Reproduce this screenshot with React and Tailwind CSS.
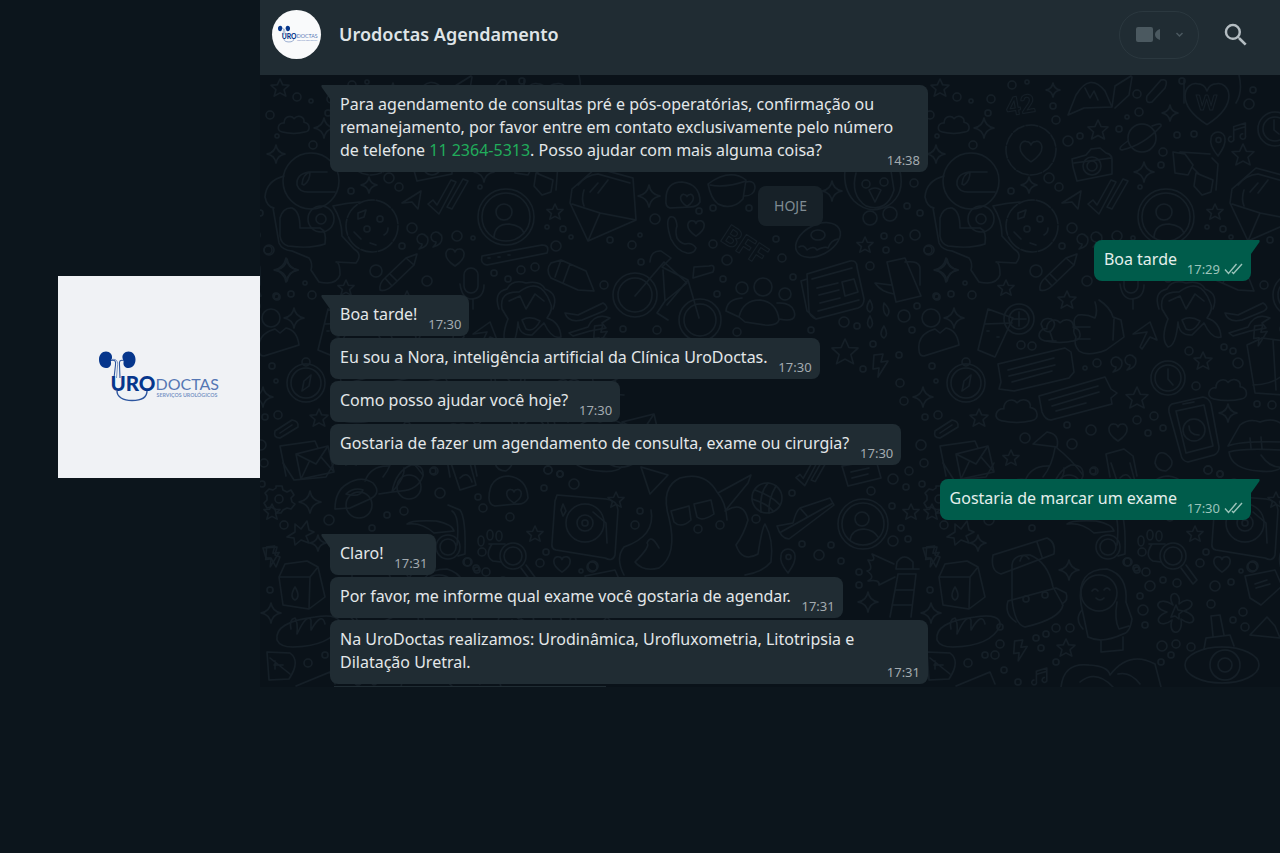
import React from "react";
import { MdSearch } from "react-icons/md";

/* ---------- brand ---------- */

function Logo({ viewBox, className }) {
  return (
    <svg viewBox={viewBox} className={className} role="img" aria-label="UroDoctas">
      <g fill="#06368c">
        <path d="M48 75.500C52 75.500 54.500 78.500 54 82C53.700 84 52.500 84.500 53 86.500C53.500 90 51 92 48 92C43.500 92 41 88 41 83.500C41 79 44 75.500 48 75.500Z" />
        <path d="M70.500 75.500C66.500 75.500 64 78.500 64.500 82C64.800 84 66 84.500 65.500 86.500C65 90 67.500 92 70.500 92C75 92 77.500 88 77.500 83.500C77.500 79 74.500 75.500 70.500 75.500Z" />
      </g>
      <g fill="none" stroke="#2c559f" strokeWidth="1.100">
        <path d="M53 84.500C57 83.500 58 85 57.500 89L56 102M66 84.500C62 83.500 61 85 61.500 89L62 102" />
        <path d="M54 83.500C59 82.500 60 86 59.500 90L58.500 102" strokeWidth=".6" />
        <path d="M59 115C59 121 65 124.500 74 124.500C84 124.500 89 121 89 115" strokeWidth="1.400" />
      </g>
      <text x="52.500" y="115" fontFamily="Lato, sans-serif" fontWeight="900" fontSize="20.500" fill="#06368c">URO</text>
      <text x="97.500" y="114" fontFamily="Lato, sans-serif" fontWeight="400" fontSize="16" fill="#5577b4">DOCTAS</text>
      <text x="98.500" y="121" fontFamily="Lato, sans-serif" fontWeight="700" fontSize="5.300" fill="#7d97c6">SERVIÇOS UROLÓGICOS</text>
    </svg>
  );
}

/* ---------- wallpaper ---------- */

const STAR = "M0-10L3-3.500L10-3L4.500 2L6.500 9L0 5.500L-6.500 9L-4.500 2L-10-3L-3-3.500Z";
const SPARK = "M0-10Q1.500-1.500 10 0Q1.500 1.500 0 10Q-1.500 1.500-10 0Q-1.500-1.500 0-10Z";
const HEART = "M0 9C-14 0-9-9-4-8Q-1-8 0-5Q1-8 4-8C9-9 14 0 0 9Z";
const CLOUD = "M-13 9C-21 7-17-2-11-1C-11-9-3-10 0-6C5-11 12-8 11-2C18-1 19 8 12 9Q0 12-13 9Z";
const BOLT = "M-6-10L3-11L1-3L8-4L-2 12L-1 3L-7 4Z";
const QUOTES = "M-4-7a5 5 0 1 0-4 8q0 3-3 5q9-2 9-9q0-3-2-4M10-9a5 5 0 1 0-4 8q0 3-3 5q9-2 9-9q0-3-2-4";
const CHECKS = "M-20 2L-15-2L-11 3L3-22L8-20L-9 12ZM-1 5L15-23L20-21L4 7Z";
const PENCIL = "M-20 17Q-21 10-15 5L6-15L17-19L14-8L-8 13Q-15 19-20 17M6-15L14-8M-15 5L-8 13M-10 1L-3 8";
const NOTE = "M-7 7V-6L6-10V4M-7 7a3 3 0 1 1-3-2M6 4a3 3 0 1 1-3-2M-7-2L6-6";
const ENVELOPE = "M-18-8L14-16L20 10L-13 17ZM-18-8L2 2L14-16M-13 17L-5 0M20 10L7-5";
const PIN = "M0 13Q-9 2-7-4A7 7 0 0 1 7-4Q8 2 0 13ZM-2-3a2.500 2.500 0 1 0 5 0a2.500 2.500 0 1 0-5 0";
const PHONE = "M-12-18Q-6-20-5-9Q-7-4-5 3Q-2 8 3 9Q10 7 14 13Q12 19 5 18Q-5 16-11 4Q-17-14-12-18Z";

const marks = [
  [STAR, 280, 88, 0.9], [STAR, 1098, 130, 1], [STAR, 1243, 155, 1.100], [STAR, 555, 212, 0.8],
  [STAR, 346, 288, 0.8], [STAR, 1067, 300, 0.9], [STAR, 865, 245, 0.8], [STAR, 845, 352, 1.300],
  [STAR, 1203, 361, 0.9], [STAR, 1137, 398, 1.100], [STAR, 979, 418, 0.9], [STAR, 1011, 458, 0.8],
  [STAR, 535, 534, 0.8], [STAR, 911, 512, 0.8], [STAR, 616, 500, 0.8], [STAR, 1066, 648, 0.9], [STAR, 272, 512, 0.8],
  [SPARK, 1053, 90, 0.7], [SPARK, 984, 128, 1], [SPARK, 276, 154, 0.9], [SPARK, 369, 185, 0.8],
  [SPARK, 1144, 172, 1], [SPARK, 1170, 113, 0.8], [SPARK, 287, 270, 1.100], [SPARK, 649, 196, 1.100],
  [SPARK, 832, 191, 1], [SPARK, 946, 270, 1.200], [SPARK, 923, 397, 1], [SPARK, 954, 318, 1],
  [SPARK, 1228, 413, 0.9], [SPARK, 310, 502, 1.100], [SPARK, 1069, 570, 1], [SPARK, 271, 613, 1],
  [SPARK, 868, 602, 1], [SPARK, 978, 543, 0.8],
  [HEART, 455, 257, 1], [HEART, 696, 228, 0.9], [HEART, 1118, 432, 1], [HEART, 562, 564, 0.9], [HEART, 1207, 103, 2.400],
  [HEART, 1031, 151, 1.200], [HEART, 687, 200, 0.7], [HEART, 514, 496, 0.8],
  [CLOUD, 294, 124, 0.9], [CLOUD, 1017, 410, 1.200], [CLOUD, 1228, 389, 1.100], [CLOUD, 400, 330, 1.200],
  [BOLT, 880, 365, 1], [BOLT, 932, 556, 0.9], [BOLT, 1020, 650, 0.9], [BOLT, 600, 335, 0.9],
  [QUOTES, 430, 243, 1], [QUOTES, 1124, 366, 1],
  [CHECKS, 448, 202, 1], [CHECKS, 812, 476, 0.8], [PENCIL, 400, 273, 1],
  [NOTE, 1240, 132, 0.9], [NOTE, 1042, 676, 0.8], [ENVELOPE, 974, 462, 1], [ENVELOPE, 640, 430, 1],
  [PIN, 1218, 143, 1], [PIN, 788, 560, 1], [PHONE, 682, 235, 1],
];

const rings = [
  [297, 97, 4], [270, 115, 4], [313, 145, 4], [277, 136, 2], [311, 101, 2], [389, 178, 5], [399, 187, 4], [351, 191, 3],
  [412, 228, 5], [457, 236, 5], [402, 246, 3], [376, 271, 6], [427, 281, 5], [268, 250, 4], [305, 283, 2], [312, 295, 4],
  [276, 296, 3], [291, 294, 3], [473, 238, 2], [556, 246, 5], [571, 237, 2], [521, 270, 4], [535, 267, 4], [494, 273, 3],
  [508, 279, 3], [547, 227, 2], [563, 229, 3], [655, 219, 5], [699, 211, 3], [713, 208, 3], [632, 245, 4], [640, 235, 2],
  [713, 244, 4], [727, 260, 5], [749, 208, 3], [782, 258, 4], [776, 239, 3], [899, 239, 4], [915, 235, 5], [886, 250, 3],
  [884, 236, 3], [929, 250, 5], [914, 183, 4], [907, 206, 3], [920, 213, 3], [641, 262, 3], [723, 279, 3], [717, 294, 3],
  [870, 266, 4], [844, 322, 5], [857, 326, 3], [811, 330, 3], [737, 332, 4], [657, 330, 4], [623, 329, 3], [604, 285, 4],
  [793, 277, 3], [873, 344, 3], [899, 355, 3], [900, 383, 4], [863, 369, 3], [904, 316, 6], [917, 306, 3], [937, 297, 3],
  [912, 330, 3], [1021, 345, 4], [1032, 346, 4], [1097, 363, 4], [1085, 368, 2], [932, 366, 3], [936, 381, 2],
  [925, 417, 3], [938, 415, 4], [904, 401, 4], [921, 445, 5], [924, 463, 4], [909, 471, 4], [1025, 438, 5], [1072, 444, 5],
  [1067, 425, 3], [1091, 430, 5], [1137, 420, 4], [1154, 416, 4], [1148, 433, 3], [1163, 428, 3], [1189, 351, 4],
  [1238, 363, 5], [1196, 386, 4], [1224, 347, 3], [1233, 351, 3], [1257, 404, 3], [1272, 405, 4], [1208, 470, 4],
  [1220, 474, 3], [1094, 471, 4], [329, 520, 5], [284, 525, 4], [372, 528, 3], [404, 511, 4], [387, 515, 3], [440, 493, 5],
  [433, 471, 3], [548, 470, 4], [560, 474, 3], [574, 484, 5], [510, 517, 4], [544, 488, 3], [483, 508, 4], [478, 497, 3],
  [467, 562, 4], [477, 570, 3], [592, 567, 5], [546, 552, 3], [635, 525, 4], [640, 511, 3], [698, 529, 4], [720, 525, 4],
  [756, 519, 4], [792, 493, 3], [802, 544, 3], [819, 555, 5], [831, 545, 3], [841, 561, 3], [871, 491, 4], [893, 479, 5],
  [906, 487, 3], [922, 484, 3], [892, 506, 3], [893, 541, 5], [908, 539, 3], [901, 528, 3], [859, 572, 3],
  [859, 585, 3], [930, 590, 3], [1000, 627, 3], [1128, 562, 4], [1136, 568, 3], [1146, 572, 4], [1150, 586, 5],
  [1143, 610, 5], [1140, 596, 3], [1145, 625, 3], [1163, 580, 3], [1177, 583, 4], [1215, 586, 5], [1231, 582, 3],
  [1211, 604, 4], [1243, 612, 4], [1233, 620, 3], [1245, 627, 4], [1200, 563, 4], [1253, 566, 5], [1241, 571, 2],
  [1162, 646, 5], [1176, 644, 4], [1191, 647, 4], [1171, 655, 3], [1161, 662, 3], [1056, 628, 4], [1070, 628, 4],
  [1046, 634, 3], [1036, 638, 3], [1000, 644, 4], [985, 655, 3], [995, 655, 4], [968, 663, 4], [1004, 670, 3], [1018, 682, 3],
  [1041, 648, 3], [1056, 662, 3], [1012, 85, 4], [1027, 82, 2], [991, 99, 4], [988, 113, 3], [1056, 120, 4], [1053, 106, 3],
  [1068, 141, 5], [1080, 136, 3], [1119, 129, 3], [1137, 94, 4], [1139, 112, 4], [1140, 187, 2], [1163, 152, 4],
  [1161, 165, 3], [1177, 135, 3], [1194, 134, 3], [1249, 104, 5], [1253, 90, 3], [1182, 81, 3], [1127, 117, 2], [1270, 240, 3],
];

const Doodle = ({ x, y, s = 1, d }) => (
  <path d={d} transform={`translate(${x} ${y}) scale(${s})`} vectorEffect="non-scaling-stroke" />
);

function Doodles() {
  return (
    <g id="doodles">
      {marks.map(([d, x, y, s], i) => <Doodle key={i} d={d} x={x} y={y} s={s} />)}
      {rings.map(([x, y, r], i) => <circle key={i} cx={x} cy={y} r={r} />)}

      {/* lettering */}
      <g fontFamily="Lato, sans-serif" fontWeight="900" strokeWidth="1">
        <text x="1006" y="114" fontSize="25" transform="rotate(-10 1020 105)">42</text>
        <text x="1196" y="110" fontSize="20">W</text>
        <text x="719" y="240" fontSize="27" transform="rotate(33 719 240)">BFF</text>
      </g>

      {/* astronaut */}
      <circle cx="311" cy="181" r="28" />
      <path d="M327 172H309Q296 174 297 185Q300 193 310 192H335M302 184Q303 174 310 172Q310 181 304 185Z" />
      <path d="M284 176Q266 181 265 197Q267 207 274 208M273 208L279 243Q282 250 292 251L309 258Q313 263 311 270L319 282Q336 286 340 275Q340 262 336 262L356 263Q363 254 354 249L342 236Q342 220 333 206Q346 203 360 202" />
      <path d="M280 236V218Q283 207 292 208Q300 211 300 228H320Q327 231 325 244Q310 249 288 246Q281 244 280 236Z" />
      <circle cx="321" cy="219" r="13" /><circle cx="321" cy="219" r="5" />
      {/* cookie */}
      <circle cx="372" cy="226" r="26" strokeDasharray="16 2" />
      <path d="M358 213l8-3l-2 7l-6 2zM388 228q0 5-4 7M354 232l7 7M370 243l6 2" />
      <circle cx="367" cy="229" r="3" /><circle cx="380" cy="219" r="3" />
      {/* profile */}
      <circle cx="506" cy="217" r="28" /><circle cx="506" cy="217" r="24" /><circle cx="504" cy="212" r="8" />
      <path d="M494 237Q495 224 509 224Q522 226 524 233" />
      <circle cx="863" cy="524" r="25" /><circle cx="863" cy="524" r="21" /><circle cx="862" cy="519" r="7" />
      <path d="M850 540Q852 529 864 529Q874 530 878 537" />
      {/* ruler, paper plane, letter */}
      <path d="M482 256L542 245Q550 245 547 253L487 265Q480 264 482 256ZM402 203L421 191L418 209L412 202ZM488 258h2m8-1h2m8-2h2" />
      <path d="M572 189L596 168L633 178L636 220L588 241L570 203ZM578 185Q586 175 598 174L630 183M572 204L600 213L636 220M600 213L588 241M584 206Q581 199 584 190M590 192l8-9m0 10l10-13" />
      {/* crayon, microphone, afro */}
      <path d="M551 263L561 260L586 271L594 291L578 290L551 278Q545 270 551 263M561 260L555 277M570 264L563 283M464 275a7 7 0 0 1 14 0v11a7 7 0 0 1-14 0ZM460 284Q462 299 472 299Q484 298 484 285M473 299V309" />
      <path d="M499 309Q493 292 507 289Q512 279 526 283Q540 280 545 289Q559 294 553 309M509 301L520 296L526 309L535 294L544 301" />
      {/* egg, cup, lion */}
      <path d="M666 199Q666 182 682 182Q700 184 700 202Q697 207 690 207L670 208Q665 207 666 199ZM708 184Q730 168 746 180L743 199Q732 211 718 204Q711 199 708 184ZM746 182Q755 180 755 188Q754 196 744 196M710 185Q726 188 746 181" />
      <path d="M845 170Q843 189 854 201Q870 216 889 205Q905 194 900 171M856 173Q850 195 866 206Q887 213 894 190L891 171M869 190Q875 186 881 190L875 202Z" />
      <circle cx="866" cy="184" r="4" /><circle cx="884" cy="182" r="4" /><circle cx="870" cy="218" r="7" /><circle cx="890" cy="214" r="7" />
      {/* doughnut */}
      <ellipse cx="818" cy="240" rx="24" ry="15" transform="rotate(-28 818 240)" /><ellipse cx="818" cy="235" rx="7" ry="5" />
      <path d="M799 247Q804 244 807 250Q814 245 817 250Q825 246 828 248Q831 240 838 239" />
      {/* bicycle */}
      <circle cx="635" cy="295" r="22" /><circle cx="635" cy="295" r="17" /><circle cx="700" cy="320" r="21" /><circle cx="700" cy="320" r="16" />
      <path d="M635 296L664 262L687 283L665 301L663 270M650 262Q651 250 661 251L671 258L662 267L688 280L699 318M693 278L713 272Q716 264 709 266L694 267ZM665 301L657 313L668 320M688 280L667 305" />
      {/* group */}
      <circle cx="763" cy="287" r="9" /><circle cx="742" cy="288" r="6" /><circle cx="785" cy="294" r="6" />
      <path d="M739 317Q743 300 760 300Q777 302 779 320Q777 326 765 325L745 322ZM739 317L726 311Q727 299 742 298M779 319Q798 323 794 311Q791 302 777 303" />
      {/* newspaper */}
      <path d="M807 274L850 261Q857 260 857 267L864 299Q864 306 858 308L816 319Q810 317 809 311ZM807 279L801 281L807 311L815 318M812 279L852 268M817 288L838 283M819 295L839 290M820 303L840 298M818 311L859 300M842 282L854 279L858 292L845 296Z" />
      {/* watering can */}
      <path d="M887 262L905 258L921 296L896 302ZM894 294Q881 292 875 283L891 285M905 262Q920 260 920 269V285" />
      {/* person */}
      <circle cx="931" cy="318" r="9" />
      <path d="M919 350Q917 334 935 329L940 333L946 328Q957 330 959 345L924 356Q919 356 919 350ZM870 300q-6 9 0 12q5-3 0-12M884 303q-2 9 3 13q5-5-3-13M870 316q-5 8 0 12q5-3 0-12M884 326q-6 9 0 12q5-3 0-12" />
      {/* lemonade and goblet */}
      <circle cx="1019" cy="319" r="15" /><circle cx="1019" cy="319" r="10" />
      <path d="M988 309L1013 318L995 357L978 350ZM985 324L1012 323M1012 319h14M1019 312v14M1041 324Q1043 317 1051 319Q1058 323 1051 331Q1044 334 1041 324M1050 332L1053 341M1047 341h9M987 331h2m8 6h2" />
      {/* thumb */}
      <path d="M1099 300Q1110 307 1113 317L1121 320L1124 337L1106 350Q1088 357 1079 351Q1073 344 1076 337Q1072 331 1075 327Q1072 319 1078 315Q1087 314 1095 318Q1098 311 1095 302M1075 327H1090M1077 339H1090M1114 319L1113 340" />
      {/* arrow, cat, tools */}
      <path d="M1133 334L1150 322L1157 340L1150 337L1142 349L1140 347L1147 332ZM1162 309Q1159 291 1179 292Q1200 276 1210 302Q1214 309 1207 318Q1220 322 1221 337Q1212 340 1204 323L1192 335Q1179 336 1178 322Q1176 346 1168 347Q1160 339 1168 319ZM1182 320Q1190 315 1200 321Q1194 333 1186 329Z" />
      <path d="M1225 313L1238 315L1263 303Q1270 307 1264 311L1242 320Q1228 323 1225 313ZM1229 333L1248 327Q1255 312 1270 318L1262 323L1266 328L1250 331L1233 336Z" />
      {/* compass */}
      <circle cx="966" cy="383" r="19" /><circle cx="966" cy="383" r="15" /><circle cx="966" cy="362" r="4" /><path d="M964 381L971 375L969 386L962 391Z" />
      {/* speech cards */}
      <path d="M998 364L1065 348L1071 352L1074 372L1069 378L1014 391L999 389L1001 382ZM1008 370L1054 358M1009 376L1055 365M1012 382L1052 371" />
      <path d="M1039 396L1105 377L1111 389L1117 393L1111 398L1112 404L1051 420Q1045 420 1042 412ZM1049 400L1098 386M1052 406L1099 392M1056 411L1086 403" />
      {/* clock, phone, lips */}
      <circle cx="1168" cy="378" r="17" /><circle cx="1168" cy="378" r="13" /><path d="M1168 369V379L1173 385" />
      <path d="M1172 404L1203 397Q1209 398 1211 404L1219 447Q1219 453 1214 455L1188 462Q1182 461 1181 455L1169 412Q1168 406 1172 404ZM1176 411L1204 405L1213 446L1186 453ZM1183 404L1194 402" />
      <circle cx="1194" cy="430" r="11" /><path d="M1189 426Q1189 435 1199 435" />
      <path d="M1228 446L1240 425Q1249 418 1260 422Q1273 417 1282 424M1228 446Q1240 441 1282 442M1229 452Q1242 448 1280 450M1229 452Q1231 469 1259 471Q1275 473 1282 467M1250 438l1 10m10-11l1 12" />
      {/* parcel */}
      <path d="M1247 345L1262 338L1285 341M1247 345L1255 393L1284 395M1273 340L1276 390M1253 385Q1270 385 1282 376" />
      {/* clip, postcard, kite */}
      <path d="M935 431L952 420Q959 421 958 427L940 438Q933 438 935 431ZM940 433L952 425M940 446L975 441L978 448M940 446L946 476" />
      <path d="M1033 444L1047 432Q1060 434 1057 447L1033 444M1055 448Q1052 466 1043 477M1057 448Q1071 459 1083 475M1106 454L1124 449L1133 456L1137 476M1106 454L1110 477M1155 463q2-14 11-9q12 9 0 17q-9 0-11-8Z" />
      {/* gear */}
      <path d="M276 486h6l1 4l4 2l4-2l3 5l-3 3l1 4l3 2l-4 5l-4-1l-4 2l-2 3h-5l-1-4l-4-2l-4 1l-3-5l3-3v-4l-2-3l4-4l4 1l3-2z" /><circle cx="279" cy="499" r="4" />
      {/* scooter plane */}
      <path d="M335 509Q335 491 347 484Q361 475 373 483Q382 493 370 499L350 508ZM346 494Q354 487 363 490Q360 498 346 494ZM365 481Q371 465 389 466M379 494L392 492Q405 478 404 468M392 492Q396 471 411 465Q424 464 423 476Q418 490 401 491Z" />
      <circle cx="359" cy="505" r="13" /><circle cx="409" cy="487" r="12" />
      <path d="M283 463L294 480L326 477L334 463M451 463L460 490L476 485L470 463M460 478Q468 470 472 482" />
      <path d="M489 498Q489 477 508 476Q527 478 528 498Q525 505 516 504L495 506Q489 505 489 498Z" />
      {/* turntable */}
      <path d="M557 495L606 499Q617 500 618 510L615 555Q613 562 605 558L556 550Q551 549 552 543L555 501ZM563 504l3 7l-3 5l-2-6zM593 512L606 523L607 543" />
      <circle cx="585" cy="523" r="19" /><circle cx="585" cy="523" r="8" /><circle cx="585" cy="523" r="3" />
      {/* stroller */}
      <path d="M407 524Q411 520 436 521Q452 524 454 531L434 533Q422 522 407 524ZM448 505L460 510Q466 518 465 554L458 556M452 511Q460 516 457 545" />
      <circle cx="448" cy="547" r="12" /><circle cx="448" cy="547" r="8" />
      {/* magnifier and paw */}
      <circle cx="513" cy="556" r="13" /><circle cx="513" cy="556" r="9" />
      <path d="M489 544H505M492 544Q484 556 493 561L501 562M521 568L533 584L537 580L526 565" />
      <ellipse cx="481" cy="541" rx="3" ry="5" /><ellipse cx="490" cy="535" rx="3" ry="5" /><ellipse cx="499" cy="536" rx="3" ry="5" /><circle cx="482" cy="552" r="4" />
      <path d="M295 524l6 5l6-8l2 9l5 2l-8 4l3 7l-8-3l-6 5l-1-7l-7-1l8-5zM263 548L277 547L275 555L280 557L276 567L271 558L266 558Z" />
      {/* carton */}
      <path d="M285 564L307 561L318 567L325 597L309 609L283 605L279 577ZM279 577H310L309 609M310 577L318 567M285 564L279 577M295 587q-6 10 0 13q6-3 0-13" />
      {/* loaf */}
      <path d="M277 640Q274 622 315 617Q342 613 340 626Q331 646 293 647Q280 647 277 640ZM291 629Q289 619 295 618Q298 622 297 634Q307 613 311 620V630Q322 611 325 624" />
      <path d="M267 652L290 653Q301 661 289 679L269 680ZM270 658L290 674M275 661v8m8-4h-9M296 686L330 672L335 684" />
      {/* slice, octopus */}
      <path d="M641 467L668 475L650 494ZM601 455Q615 476 638 461" />
      <path d="M669 518Q660 487 680 478Q705 471 717 492Q726 502 727 520M671 511L689 506L691 520Q681 529 674 522ZM694 504L711 500L714 514Q702 522 697 517ZM718 493L751 475L748 483L725 511M727 510Q744 501 748 520Q744 534 736 545Q742 563 758 554Q762 528 765 524Q774 540 771 562Q763 572 745 575M669 518Q678 555 659 568Q643 572 635 562Q651 546 647 543Q651 533 659 548M651 510Q656 536 624 547Q615 558 624 575" />
      {/* basketball, trainer */}
      <circle cx="767" cy="498" r="15" /><path d="M755 490Q772 496 780 505M752 499Q768 504 773 511M768 483Q759 493 761 512M776 486Q768 499 769 513" />
      <path d="M777 526L793 523Q796 511 800 508L830 498L834 505L789 539Q781 539 777 526ZM781 532L833 503M800 508L807 516M842 466L876 460L881 478L848 486ZM851 472L869 468M852 478L868 474" />
      {/* lighthouse */}
      <path d="M897 562Q904 552 913 562V569H896ZM896 569H919M898 574H916L911 617M898 574L890 617M895 590H914M892 605H912M894 564L872 554Q877 562 868 560Q874 570 867 571Q876 577 868 581Q880 579 879 585L895 577" />
      {/* rucksack */}
      <path d="M993 555L1047 538Q1056 542 1054 554L1001 574Q990 571 993 555ZM1012 565Q1013 554 1030 555Q1048 562 1053 587L1063 605Q1060 619 1025 627Q1015 625 1012 600ZM1008 601Q1004 614 1016 622M1008 601L1056 588L1066 593Q1069 600 1062 604M1037 542L1042 557M1020 561Q1023 551 1029 559" />
      <circle cx="1026" cy="599" r="3" /><circle cx="1045" cy="595" r="3" />
      {/* diver */}
      <circle cx="1099" cy="593" r="18" />
      <path d="M1081 604Q1076 569 1107 569Q1128 575 1126 602L1132 619Q1130 633 1123 634Q1102 644 1088 637ZM1082 610Q1074 619 1083 629M1117 602Q1114 620 1119 629L1129 626M1101 640V652L1123 650V637M1092 591q3-4 6 0m6-1q3-4 6 0m-14 8q4 4 8 0" />
      {/* blossom */}
      <path d="M1173 605C1165 590 1182 590 1179 604C1190 594 1199 606 1184 611C1200 616 1194 629 1181 619C1184 637 1167 636 1172 620C1160 630 1151 618 1167 612C1151 608 1158 595 1173 605Z" /><path d="M1176 605l2 5l5 1l-4 3v5l-4-3l-4 1l2-5z" />
      {/* submarine */}
      <ellipse cx="1222" cy="665" rx="37" ry="18" /><circle cx="1225" cy="665" r="15" /><circle cx="1225" cy="665" r="7" />
      <path d="M1204 649L1206 638L1230 635L1234 646M1213 636L1211 616L1220 615L1224 635M1245 576L1275 570L1282 586L1261 605L1250 598ZM1255 584l12-4m-11 8l14-4M1250 635L1267 617L1275 626L1280 638Z" />
      {/* whale tail */}
      <path d="M1061 687Q1064 662 1089 665Q1108 666 1110 675Q1129 650 1155 664L1161 687M1080 682Q1096 669 1113 687M1118 674Q1130 671 1140 684" />
      {/* rosette, camera, planet */}
      <circle cx="1031" cy="150" r="25" strokeDasharray="12 2" />
      <path d="M1072 159L1086 155L1091 149L1100 148L1106 153Q1113 154 1112 163V174L1077 181L1073 167ZM1074 163L1111 158" />
      <circle cx="1092" cy="166" r="9" /><circle cx="1092" cy="166" r="5" />
      <circle cx="1142" cy="138" r="14" /><path d="M1128 141Q1116 149 1122 150Q1144 145 1161 126Q1162 122 1152 126" />
      {/* pizza, marker, glasses */}
      <path d="M1076 95Q1090 72 1105 91L1112 107L1084 108L1068 115ZM1085 88l5 10l4-7l4 9M1112 107L1115 86L1131 76M1115 108L1129 95L1132 77M1147 96L1161 80Q1169 78 1165 88L1152 102Q1145 104 1147 96ZM1184 103V80M1236 103Q1243 92 1239 75" />
      <path d="M1173 152L1185 154L1193 165L1188 175L1175 173ZM1196 173L1213 180L1211 192L1202 195L1194 186ZM1180 152L1210 154M1212 158L1218 164L1216 190M1193 168L1199 174" />
      <circle cx="1275" cy="129" r="17" /><circle cx="1275" cy="129" r="12" /><path d="M1274 120V130L1279 134" />
    </g>
  );
}

function Wallpaper() {
  return (
    <svg className="absolute inset-0 h-full w-full" aria-hidden="true">
      <defs>
        <pattern id="tile" width="660" height="614" patternUnits="userSpaceOnUse">
          <g transform="translate(-260 -75)" fill="none" stroke="#151f27" strokeWidth="1.500" strokeLinejoin="round" strokeLinecap="round">
            <Doodles />
            <use href="#doodles" x="-660" />
          </g>
        </pattern>
      </defs>
      <rect width="100%" height="100%" fill="url(#tile)" />
    </svg>
  );
}

/* ---------- conversation ---------- */

function Ticks() {
  return (
    <svg viewBox="0 0 19 12" className="h-3 w-[19px]" fill="none" stroke="currentColor" strokeWidth="1.400" role="img" aria-label="Entregue">
      <path d="M1 6.500L4.500 10.500L12.500 1M8 9L9.500 10.500L18 1" />
    </svg>
  );
}

function Message({ time, tail, sent, children }) {
  return (
    <li className={sent ? "flex justify-end" : "flex"}>
      <div
        className={
          "relative max-w-[598px] rounded-lg px-2.5 pt-2 pb-2.5 text-[16px] leading-[23px] " +
          (sent ? "rounded-tr-none bg-[#005c4b] text-[#e4efec]" : "bg-[#202c33] text-[#e3e7e9]") +
          (tail && !sent ? " rounded-tl-none" : "")
        }
      >
        {tail && (
          <svg
            viewBox="0 0 9 14"
            aria-hidden="true"
            className={"absolute top-0 h-3.5 w-[9px] " + (sent ? "left-full -scale-x-100 text-[#005c4b]" : "right-full text-[#202c33]")}
          >
            <path d="M1 0H9V14L.5 2Q0 0 1 0Z" fill="currentColor" />
          </svg>
        )}
        <p>
          {children}
          <span className={sent ? "inline-block w-16" : "inline-block w-[42px]"} />
        </p>
        <span className={"absolute right-2 bottom-1 flex items-center gap-1 text-[13px] leading-4 " + (sent ? "text-[#9cc4bb]" : "text-[#a3abb0]")}>
          <time>{time}</time>
          {sent && <Ticks />}
        </span>
      </div>
    </li>
  );
}

const List = ({ children }) => <ul className="flex flex-col gap-0.5">{children}</ul>;

export default function App() {
  return (
    <div className="flex min-h-screen items-start bg-[#0c151c] font-['Noto_Sans',sans-serif]">
      <aside className="flex w-[260px] shrink-0 justify-end pt-[276px]">
        <div className="size-[202px] bg-[#f0f2f5]">
          <Logo viewBox="0 0 202 202" className="size-full" />
        </div>
      </aside>

      <main className="min-w-0 flex-1">
        <header className="flex h-[75px] items-center bg-[#202c33] pr-[29px] pb-1.5 pl-3">
          <div className="flex size-[49px] shrink-0 items-center overflow-hidden rounded-full bg-[#f9fafb]">
            <Logo viewBox="23 28 148 148" className="size-full" />
          </div>
          <h1 className="ml-[18px] flex-1 text-[18px] font-semibold text-[#dfe4e7]">Urodoctas Agendamento</h1>
          <button aria-label="Chamada de vídeo" className="flex h-12 w-20 items-center justify-between rounded-full border border-[#2b383f] pr-3.5 pl-4 text-[#4b5960]">
            <svg viewBox="0 0 25 16" className="h-4 w-[25px]" fill="currentColor">
              <rect width="17" height="15" rx="2" />
              <path d="M24 2V13Q19 11 19 7.500Q19 4 24 2Z" />
            </svg>
            <svg viewBox="0 0 9 6" className="h-1.5 w-[9px]" fill="none" stroke="currentColor" strokeWidth="1.500">
              <path d="M1.500 1L4.500 4L7.500 1" />
            </svg>
          </button>
          <button aria-label="Pesquisar" className="ml-[22px] text-[#b4bdc2]">
            <MdSearch size={30} />
          </button>
        </header>

        <div className="relative overflow-hidden bg-[#0a1219]">
          <Wallpaper />
          <div className="relative flex flex-col gap-3.5 pt-2.5 pr-[29px] pl-[70px]">
            <List>
              <Message time="14:38" tail>
                Para agendamento de consultas pré e pós-operatórias, confirmação ou remanejamento, por favor entre em contato
                exclusivamente pelo número de&nbsp;telefone{" "}
                <a href="tel:1123645313" className="text-[#21ad5b]">11 2364-5313</a>. Posso ajudar com mais alguma coisa?
              </Message>
            </List>
            <div className="flex justify-center">
              <span className="rounded-lg bg-[#172128] px-4 py-2 text-[14px] leading-6 text-[#7f8b92]">HOJE</span>
            </div>
            <List>
              <Message time="17:29" sent tail>Boa tarde</Message>
            </List>
            <List>
              <Message time="17:30" tail>Boa tarde!</Message>
              <Message time="17:30">Eu sou a Nora, inteligência artificial da Clínica UroDoctas.</Message>
              <Message time="17:30">Como posso ajudar você hoje?</Message>
              <Message time="17:30">Gostaria de fazer um agendamento de consulta, exame ou cirurgia?</Message>
            </List>
            <List>
              <Message time="17:30" sent tail>Gostaria de marcar um exame</Message>
            </List>
            <List>
              <Message time="17:31" tail>Claro!</Message>
              <Message time="17:31">Por favor, me informe qual exame você gostaria de agendar.</Message>
              <Message time="17:31">Na UroDoctas realizamos: Urodinâmica, Urofluxometria, Litotripsia e Dilatação Uretral.</Message>
              <li className="ml-1 h-px w-[272px] bg-[#202c33]" />
            </List>
          </div>
        </div>
      </main>
    </div>
  );
}
